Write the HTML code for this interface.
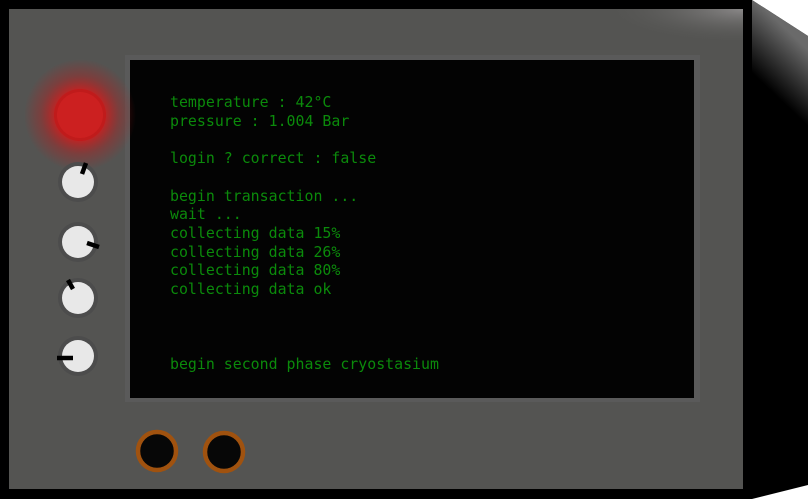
<!DOCTYPE html>
<html><head><style>
html,body{margin:0;padding:0;background:#fff;width:808px;height:499px;overflow:hidden}
.t{position:absolute;left:170px;font-family:"DejaVu Sans Mono","Liberation Mono",monospace;font-size:14.9px;color:#0b8a0b;line-height:18.7px;white-space:pre;margin:0}
</style></head><body>
<svg width="808" height="499" style="position:absolute;left:0;top:0">
<defs>
<radialGradient id="glow" cx="0.5" cy="0.5" r="0.5">
<stop offset="0.4" stop-color="#e01818" stop-opacity="0.85"/>
<stop offset="0.7" stop-color="#c01818" stop-opacity="0.35"/>
<stop offset="1" stop-color="#c01818" stop-opacity="0"/>
</radialGradient>
<linearGradient id="side" gradientUnits="userSpaceOnUse" x1="808" y1="50" x2="770" y2="90">
<stop offset="0" stop-color="#6a6a6a"/>
<stop offset="1" stop-color="#000"/>
</linearGradient>
<radialGradient id="top" gradientUnits="userSpaceOnUse" cx="743" cy="9" r="140" gradientTransform="translate(743 9) scale(1 0.25) translate(-743 -9)">
<stop offset="0" stop-color="#8a8888"/>
<stop offset="1" stop-color="#545452" stop-opacity="0"/>
</radialGradient>
</defs>
<rect x="0" y="0" width="752" height="499" fill="#000"/>
<polygon points="752,0 808,36 808,485 752,499" fill="#000"/>
<polygon points="752,0 808,36 808,160 752,80" fill="url(#side)"/>
<rect x="9" y="9" width="734" height="480" fill="#545452"/>
<rect x="500" y="9" width="243" height="40" fill="url(#top)"/>
<rect x="125" y="55" width="575" height="347" fill="#5a5a5a"/>
<rect x="130" y="60" width="564" height="338" fill="#030303"/>
<circle cx="80" cy="115" r="56" fill="url(#glow)"/>
<circle cx="80" cy="115" r="26" fill="#c01b1b"/>
<circle cx="80" cy="115" r="23" fill="#cc2020"/>
<g fill="#4c4c4c"><circle cx="78" cy="182" r="20"/><circle cx="78" cy="242" r="20"/><circle cx="78" cy="298" r="20"/><circle cx="78" cy="356" r="20"/></g>
<g fill="#e8e8e8"><circle cx="78" cy="182" r="16"/><circle cx="78" cy="242" r="16"/><circle cx="78" cy="298" r="16"/><circle cx="78" cy="356" r="16"/></g>
<g stroke="#000" stroke-width="4.5">
<line x1="86" y1="163" x2="82" y2="174"/>
<line x1="87" y1="243" x2="99" y2="247"/>
<line x1="68" y1="280" x2="73" y2="289"/>
<line x1="57" y1="358" x2="73" y2="358"/>
</g>
<circle cx="157" cy="451" r="19" fill="#070707" stroke="#a0520f" stroke-width="4.5"/>
<circle cx="224" cy="452" r="19" fill="#070707" stroke="#a0520f" stroke-width="4.5"/>
</svg>
<div class="t" style="top:93px">temperature : 42°C
pressure : 1.004 Bar

login ? correct : false

begin transaction ...
wait ...
collecting data 15%
collecting data 26%
collecting data 80%
collecting data ok



begin second phase cryostasium</div>
</body></html>
